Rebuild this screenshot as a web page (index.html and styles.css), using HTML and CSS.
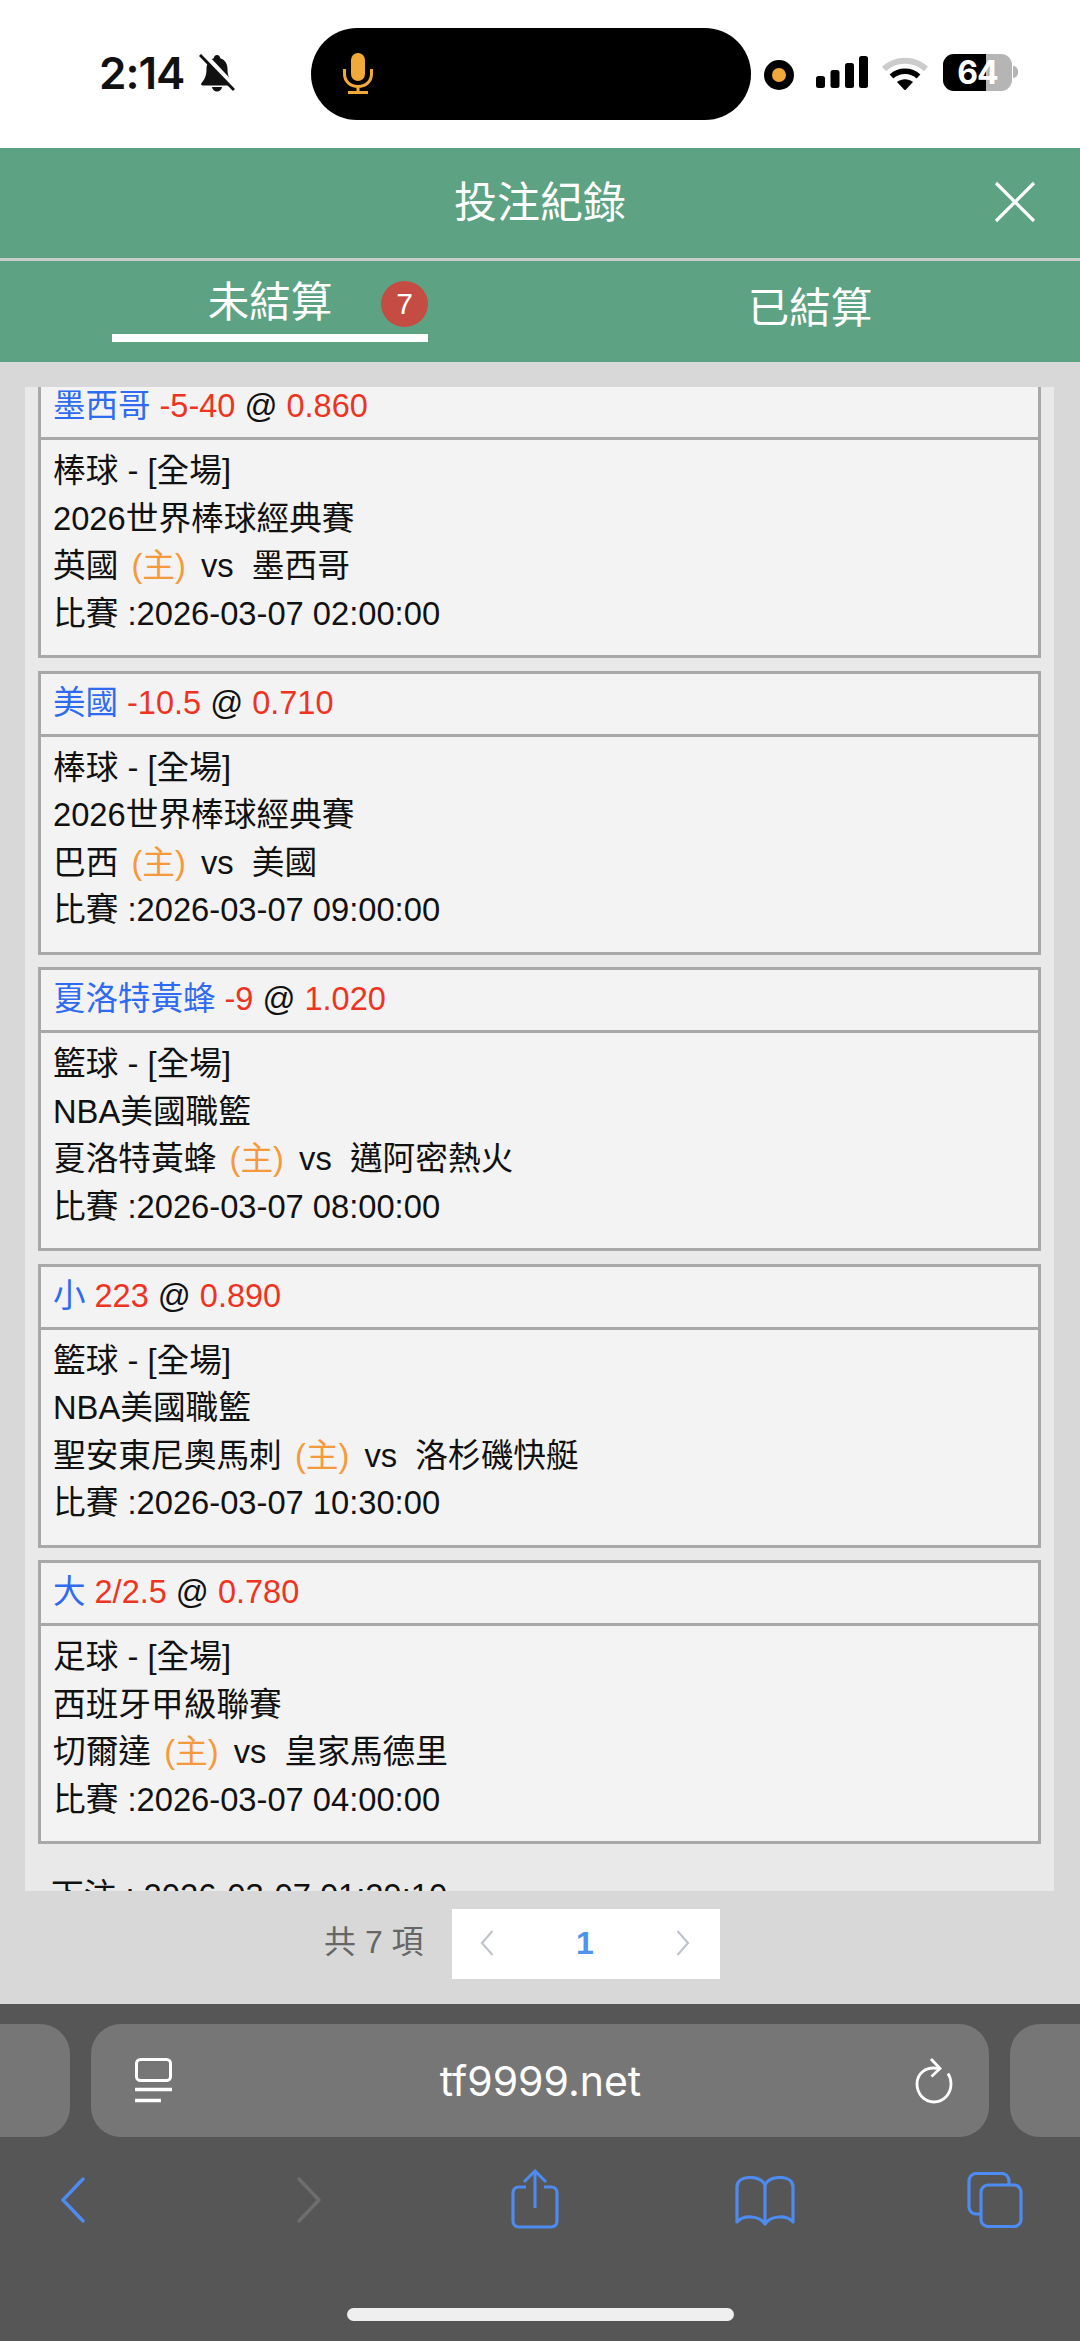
FILE: index.html
```html
<!DOCTYPE html>
<html lang="zh-Hant">
<head>
<meta charset="utf-8">
<title>投注紀錄</title>
<link rel="stylesheet" href="styles.css">
</head>
<body>
<div class="status">
  <span class="time">2:14</span>
  <svg class="bell" viewBox="0 0 36 38"><path d="M18 1c2 0 3 1.500 3.300 3.300C26 5.800 28.500 10 28.500 15c0 7 2 10.500 5 14 .8 1 .3 2.500-1.200 2.500H3.700c-1.500 0-2-1.500-1.200-2.500 3-3.500 5-7 5-14 0-5 2.500-9.200 7.200-10.700C15 2.500 16 1 18 1zM13 33h10c-.5 2.800-2.500 4.500-5 4.500s-4.500-1.700-5-4.500z" fill="#111"/><path d="M4 0l31 33" stroke="#fff" stroke-width="6"/><path d="M1 1l34 35" stroke="#111" stroke-width="3"/></svg>
  <div class="island">
    <svg class="mic" viewBox="0 0 30 41"><rect x="8" y="0" width="14" height="28" rx="7" fill="#f2a93b"/><path d="M1.500 16v5c0 7.500 6 12.500 13.500 12.500S28.500 28.500 28.500 21v-5M15 33.500V39M5 39.500h20" fill="none" stroke="#f2a93b" stroke-width="3"/></svg>
  </div>
  <span class="dot"></span>
  <svg class="signal" viewBox="0 0 52 32"><rect x="0" y="20" width="9" height="12" rx="2.500"/><rect x="14.500" y="14" width="9" height="18" rx="2.500"/><rect x="29" y="7" width="9" height="25" rx="2.500"/><rect x="43" y="0" width="9" height="32" rx="2.500"/></svg>
  <svg class="wifi" viewBox="0 0 46 34"><path d="M2 13C14 2 32 2 44 13" fill="none" stroke="#ccc" stroke-width="6"/><path d="M9.500 20.500C17 13.500 29 13.500 36.500 20.500" fill="none" stroke="#000" stroke-width="5.500"/><path d="M15 26c5-3.700 11-3.700 16 0l-8 8.500z" fill="#000"/></svg>
  <div class="battery"><span class="batt-fill"></span><span class="batt-num">64</span></div>
  <span class="batt-nub"></span>
</div>

<header class="title-bar">
  <h1 class="title">投注紀錄</h1>
  <svg class="close" viewBox="0 0 42 42"><path d="M2 2l38 38M40 2L2 40" stroke="#fff" stroke-width="3.200" fill="none"/></svg>
</header>

<nav class="tabs">
  <div class="tab tab-on"><span class="tab-label">未結算</span><span class="badge">7</span></div>
  <div class="tab"><span class="tab-label tab-low">已結算</span></div>
</nav>

<main class="content">
  <section class="panel">
    <div class="list">
      <article class="bet">
        <div class="bet-head"><span class="blue">墨西哥</span> <span class="red">-5-40</span> @ <span class="red">0.860</span></div>
        <div class="bet-body"><p>棒球 - [全場]</p><p>2026世界棒球經典賽</p><p>英國 <span class="orange">(主)</span> vs&nbsp; 墨西哥</p><p>比賽 :2026-03-07 02:00:00</p></div>
      </article>
      <article class="bet">
        <div class="bet-head"><span class="blue">美國</span> <span class="red">-10.5</span> @ <span class="red">0.710</span></div>
        <div class="bet-body"><p>棒球 - [全場]</p><p>2026世界棒球經典賽</p><p>巴西 <span class="orange">(主)</span> vs&nbsp; 美國</p><p>比賽 :2026-03-07 09:00:00</p></div>
      </article>
      <article class="bet">
        <div class="bet-head"><span class="blue">夏洛特黃蜂</span> <span class="red">-9</span> @ <span class="red">1.020</span></div>
        <div class="bet-body"><p>籃球 - [全場]</p><p>NBA美國職籃</p><p>夏洛特黃蜂 <span class="orange">(主)</span> vs&nbsp; 邁阿密熱火</p><p>比賽 :2026-03-07 08:00:00</p></div>
      </article>
      <article class="bet">
        <div class="bet-head"><span class="blue">小</span> <span class="red">223</span> @ <span class="red">0.890</span></div>
        <div class="bet-body"><p>籃球 - [全場]</p><p>NBA美國職籃</p><p>聖安東尼奧馬刺 <span class="orange">(主)</span> vs&nbsp; 洛杉磯快艇</p><p>比賽 :2026-03-07 10:30:00</p></div>
      </article>
      <article class="bet">
        <div class="bet-head"><span class="blue">大</span> <span class="red">2/2.5</span> @ <span class="red">0.780</span></div>
        <div class="bet-body"><p>足球 - [全場]</p><p>西班牙甲級聯賽</p><p>切爾達 <span class="orange">(主)</span> vs&nbsp; 皇家馬德里</p><p>比賽 :2026-03-07 04:00:00</p></div>
      </article>
      <p class="placed">下注 : 2026-03-07 01:29:10</p>
    </div>
  </section>
  <div class="pager">
    <span class="total">共 7 項</span>
    <div class="pages">
      <svg class="chev" viewBox="0 0 14 28"><path d="M12.500 2L2 14l10.500 12" fill="none" stroke="#c0c4cc" stroke-width="2.200"/></svg>
      <span class="page-num">1</span>
      <svg class="chev" viewBox="0 0 14 28"><path d="M1.500 2L12 14 1.500 26" fill="none" stroke="#c0c4cc" stroke-width="2.200"/></svg>
    </div>
  </div>
</main>

<footer class="toolbar">
  <div class="url-row">
    <div class="pill-side"></div>
    <div class="pill-main">
      <svg class="reader" viewBox="0 0 37 45"><rect x="1.500" y="1.500" width="34" height="21" rx="4" fill="none" stroke="#fff" stroke-width="3"/><path d="M0 31.500h37M0 42.500h26" stroke="#fff" stroke-width="3.400"/></svg>
      <span class="url">tf9999.net</span>
      <svg class="reload" viewBox="0 0 38 46"><path d="M23 10.500C11 8 2 15.500 2 26c0 10 7.500 18 17 18s17-8 17-18c0-4-1-7.500-3-10.500" fill="none" stroke="#fff" stroke-width="2.800"/><path d="M16 1l9 9.500-8.500 8" fill="none" stroke="#fff" stroke-width="2.800"/></svg>
    </div>
    <div class="pill-side"></div>
  </div>
  <div class="tools">
    <svg class="tool-back" viewBox="0 0 26 46"><path d="M23 2L3 23l20 21" fill="none" stroke="#4d8bf0" stroke-width="3.400" stroke-linecap="round" stroke-linejoin="round"/></svg>
    <svg class="tool-fwd" viewBox="0 0 26 46"><path d="M3 2l20 21L3 44" fill="none" stroke="#6e6e6e" stroke-width="3.400" stroke-linecap="round" stroke-linejoin="round"/></svg>
    <svg class="tool-share" viewBox="0 0 48 60"><path d="M15 18H8c-3.500 0-6 2.500-6 6v28c0 3.500 2.500 6 6 6h32c3.500 0 6-2.500 6-6V24c0-3.500-2.500-6-6-6h-7" fill="none" stroke="#4d8bf0" stroke-width="3.200"/><path d="M24 39V2M13 13L24 2l11 11" fill="none" stroke="#4d8bf0" stroke-width="3"/></svg>
    <svg class="tool-book" viewBox="0 0 60 50"><path d="M30 9C27 3 22 1.500 15 1.500 7 1.500 2 5 2 11v35c6-7 22-7 28 2 6-9 22-9 28-2V11c0-6-5-9.500-13-9.500C38 1.500 33 3 30 9zM30 9v38" fill="none" stroke="#4d8bf0" stroke-width="3.200" stroke-linejoin="round"/></svg>
    <svg class="tool-tabs" viewBox="0 0 56 56"><path d="M42 12V9c0-4-3-7.500-7-7.500H9C5 1.500 2 5 2 9v26c0 4 3 7 7 7h4" fill="none" stroke="#4d8bf0" stroke-width="3.200"/><rect x="14" y="13" width="40" height="41.500" rx="7" fill="none" stroke="#4d8bf0" stroke-width="3.200"/></svg>
  </div>
  <div class="home-bar"></div>
</footer>
</body>
</html>
```

FILE: styles.css
```css
* { box-sizing: border-box; }
html, body { margin: 0; padding: 0; }
body {
  width: 1080px;
  height: 2341px;
  overflow: hidden;
  display: flex;
  flex-direction: column;
  font-family: "Liberation Sans", "Noto Sans CJK TC", sans-serif;
  background: #d8d8d8;
}

/* status bar */
.status {
  height: 148px;
  flex: none;
  background: #fff;
  display: flex;
  align-items: flex-start;
  padding-left: 99px;
}
.time {
  margin-top: 48px;
  font: 600 44px/50px Inter, sans-serif;
  color: #111;
  width: 100px;
  letter-spacing: -1px;
}
.bell { width: 36px; height: 38px; margin-top: 54px; }
.island {
  width: 440px;
  height: 92px;
  margin: 28px 0 0 76px;
  border-radius: 46px;
  background: #000;
  padding: 25px 0 0 32px;
}
.mic { display: block; width: 30px; height: 41px; }
.dot {
  width: 30px;
  height: 30px;
  margin: 60px 0 0 13px;
  border-radius: 50%;
  background: #f2a93b;
  border: 8px solid #000;
}
.signal { width: 52px; height: 32px; margin: 56px 0 0 22px; }
.wifi { width: 46px; height: 34px; margin: 56px 0 0 14px; }
.battery {
  position: relative;
  width: 69px;
  height: 37px;
  margin: 54px 0 0 15px;
  border-radius: 11px;
  overflow: hidden;
  background: #b5b5b5;
  text-align: center;
  font: 700 32px/37px Inter, sans-serif;
  letter-spacing: -1px;
  color: #fff;
}
.batt-fill { position: absolute; left: 0; top: 0; bottom: 0; width: 43px; background: #000; }
.batt-num { position: relative; }
.batt-nub {
  width: 5px;
  height: 12px;
  margin: 66px 0 0 1px;
  border-radius: 0 6px 6px 0;
  background: #b5b5b5;
}

/* title */
.title-bar {
  height: 113px;
  flex: none;
  background: #5ca283;
  border-bottom: 3px solid #c8cfcb;
  display: flex;
  align-items: center;
  justify-content: center;
  position: relative;
}
.title {
  margin: 0;
  font-size: 43px;
  line-height: 56px;
  font-weight: 400;
  color: #fff;
}
.close { position: absolute; right: 44px; top: 33px; width: 42px; height: 42px; }

/* tabs */
.tabs {
  height: 101px;
  flex: none;
  background: #5ca283;
  display: flex;
}
.tab { flex: 1; display: flex; justify-content: center; position: relative; }
.tab-on::after {
  content: "";
  position: absolute;
  left: 112px;
  width: 316px;
  top: 73px;
  height: 8px;
  background: #fff;
}
.tab-label { font-size: 41.500px; line-height: 54px; color: #fff; margin-top: 15px; }
.tab-low { margin-top: 21px; }
.badge {
  position: absolute;
  left: 381px;
  top: 20px;
  width: 47px;
  height: 46px;
  border-radius: 50%;
  background: #c54c42;
  color: #fff;
  font-size: 30px;
  line-height: 46px;
  text-align: center;
}

/* content */
.content {
  height: 1642px;
  flex: none;
  padding-top: 25px;
  background: #d8d8d8;
}
.panel {
  height: 1504px;
  margin: 0 26px 0 25px;
  overflow: hidden;
  background: #e9e9e9;
}
.list {
  margin-top: -13px;
  padding: 0 13px;
  display: flex;
  flex-direction: column;
  gap: 12.500px;
}
.bet {
  border: 3px solid #a8a8a8;
  background: #f3f3f3;
  font-size: 32.700px;
  color: #111;
}
.bet-head {
  padding: 0 12px;
  border-bottom: 3px solid #a8a8a8;
  height: 63px;
  line-height: 59px;
  font-size: 32.500px;
  white-space: nowrap;
}
.bet-body { height: 215px; padding: 7px 12px 0; }
.bet-body p { margin: 0; line-height: 47.500px; white-space: nowrap; }
.blue { color: #2f6bf0; }
.red { color: #ee3322; }
.orange { color: #f59a3c; margin: 0 6px 0 4px; }
.placed { margin: 15px 0 0; padding-left: 13px; font-size: 32.700px; line-height: 47px; color: #111; white-space: nowrap; }

/* pager */
.pager {
  margin-top: 18px;
  display: flex;
  align-items: flex-start;
  padding-left: 324px;
}
.total { width: 128px; font-size: 32px; line-height: 66px; color: #666; white-space: nowrap; }
.pages {
  width: 268px;
  height: 70px;
  background: #fff;
  display: flex;
  align-items: center;
  justify-content: space-between;
  padding: 0 30px 2px 28px;
}
.chev { width: 14px; height: 28px; }
.page-num { color: #4e93ee; font-weight: 700; font-size: 32px; }

/* toolbar */
.toolbar {
  flex: 1;
  background: #565656;
  padding-top: 20px;
  display: flex;
  flex-direction: column;
}
.url-row { display: flex; justify-content: center; gap: 21px; height: 113px; overflow: hidden; flex: none; }
.pill-side { width: 140px; flex: none; background: #767676; border-radius: 30px; }
.pill-main {
  width: 898px;
  flex: none;
  background: #767676;
  border-radius: 30px;
  display: flex;
  align-items: center;
  justify-content: space-between;
  padding: 0 36px 0 44px;
}
.url { font: 400 41px/50px Inter, "Liberation Sans", sans-serif; color: #fff; margin-right: 6px; }
.reader { width: 37px; height: 45px; }
.reload { width: 38px; height: 46px; }
.tools { display: flex; align-items: flex-start; height: 171px; flex: none; padding-left: 60px; }
.tool-back { width: 26px; height: 46px; margin-top: 40px; }
.tool-fwd { width: 26px; height: 46px; margin: 40px 0 0 210px; }
.tool-share { width: 48px; height: 60px; margin: 32px 0 0 189px; }
.tool-book { width: 60px; height: 50px; margin: 39px 0 0 176px; }
.tool-tabs { width: 56px; height: 56px; margin: 35px 0 0 172px; }
.home-bar { width: 387px; height: 13px; border-radius: 7px; background: #efefef; margin: 0 auto; }
```
